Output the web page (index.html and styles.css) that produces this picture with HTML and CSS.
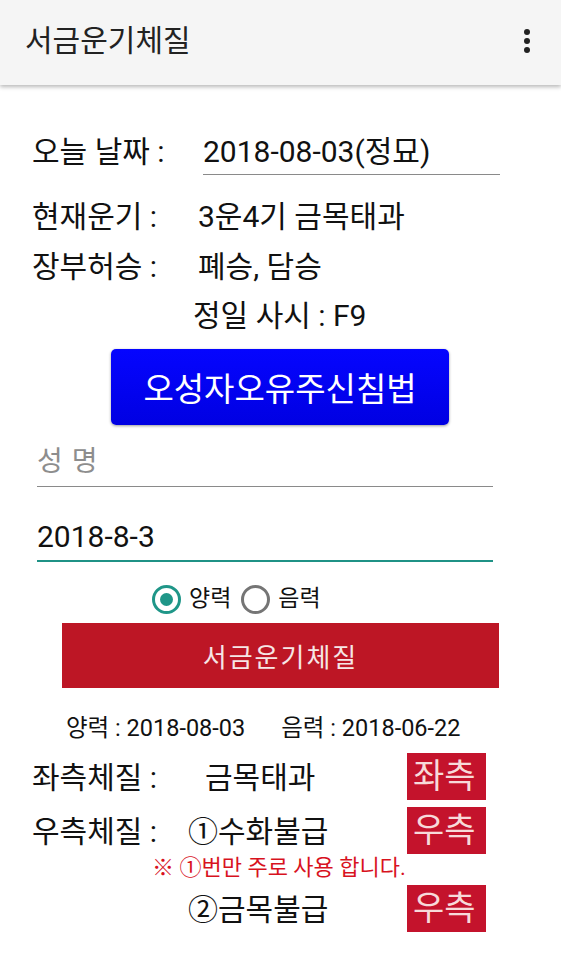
FILE: index.html
```html
<!DOCTYPE html>
<html lang="ko">
<head>
<meta charset="utf-8">
<title>서금운기체질</title>
<link rel="stylesheet" href="styles.css">
</head>
<body>
<header class="appbar">
  <div class="appbar-title">서금운기체질</div>
  <svg class="menu" width="10" height="30" viewBox="0 0 10 30" aria-hidden="true">
    <circle cx="5" cy="6" r="3"/>
    <circle cx="5" cy="15" r="3"/>
    <circle cx="5" cy="24" r="3"/>
  </svg>
</header>
<main class="content">
  <div class="row row-today">
    <span class="label">오늘 날짜 :</span>
    <span class="today-value">2018-08-03(정묘)</span>
  </div>
  <div class="row row-info r2">
    <span class="label">현재운기 :</span>
    <span class="value">3운4기 금목태과</span>
  </div>
  <div class="row row-info r3">
    <span class="label">장부허승 :</span>
    <span class="value">폐승, 담승</span>
  </div>
  <div class="row sasi">정일 사시 : F9</div>
  <button class="blue-btn">오성자오유주신침법</button>
  <div class="field field-name">성 명</div>
  <div class="field field-date">2018-8-3</div>
  <div class="radios">
    <span class="radio checked"></span><span class="radio-label">양력</span>
    <span class="radio"></span><span class="radio-label">음력</span>
  </div>
  <button class="red-btn">서금운기체질</button>
  <div class="dates">
    <span>양력 : 2018-08-03</span>
    <span>음력 : 2018-06-22</span>
  </div>
  <div class="con-row c1">
    <span class="label">좌측체질 :</span>
    <span class="con-value indent">금목태과</span>
    <span class="tag">좌측</span>
  </div>
  <div class="con-row c2">
    <span class="label">우측체질 :</span>
    <span class="con-value">①수화불급</span>
    <span class="tag">우측</span>
  </div>
  <div class="note">※ ①번만 주로 사용 합니다.</div>
  <div class="con-row c3">
    <span class="label"></span>
    <span class="con-value">②금목불급</span>
    <span class="tag">우측</span>
  </div>
</main>
</body>
</html>
```

FILE: styles.css
```css
html, body {
  margin: 0;
  padding: 0;
  background: #ffffff;
}
body {
  width: 561px;
  min-height: 960px;
  font-family: Roboto, "Noto Sans CJK KR", sans-serif;
  color: #111111;
  overflow: hidden;
}
.appbar {
  height: 85px;
  background: #f5f5f5;
  box-shadow: 0 2px 4px rgba(0, 0, 0, 0.28);
  display: flex;
  align-items: center;
  padding: 0 29px 0 25px;
  position: relative;
  z-index: 1;
}
.appbar-title {
  flex: 1;
  font-size: 30px;
  line-height: 34px;
  margin-top: -4px;
  color: #222222;
}
.menu {
  fill: #222222;
  margin-top: -4px;
}
.content {
  padding-top: 50px;
  font-size: 30px;
  line-height: 34px;
}
.row {
  display: flex;
  align-items: flex-start;
}
.label {
  padding-left: 32px;
  width: 124px;
  flex: none;
  white-space: nowrap;
}
.row-today .label {
  width: 171px;
}
.today-value {
  width: 297px;
  padding-bottom: 5px;
  border-bottom: 1.5px solid #8a8a8a;
  white-space: nowrap;
}
.row-info .label {
  width: 166px;
}
.r2 { margin-top: 25px; }
.r3 { margin-top: 16px; }
.sasi {
  margin-top: 15px;
  padding-left: 193px;
}
.blue-btn {
  display: block;
  margin: 16px 0 0 111px;
  width: 338px;
  height: 76px;
  border: none;
  border-radius: 5px;
  background: linear-gradient(#0505ff, #0000e2);
  box-shadow: 0 1px 3px rgba(0, 0, 0, 0.4);
  color: #ffffff;
  font-family: Roboto, "Noto Sans CJK KR", sans-serif;
  font-size: 33px;
  padding: 0;
}
.field {
  margin: 0 68px 0 37px;
}
.field-name {
  margin-top: 20px;
  color: #8d8d8d;
  padding-bottom: 7px;
  border-bottom: 1.5px solid #8a8a8a;
  font-size: 28px;
  letter-spacing: 1px;
}
.field-date {
  margin-top: 33px;
  padding-bottom: 6px;
  border-bottom: 2px solid #1f9286;
}
.radios {
  margin-top: 22px;
  padding-left: 152px;
  display: flex;
  align-items: center;
  height: 30px;
  font-size: 23px;
}
.radio {
  width: 23px;
  height: 23px;
  border: 3px solid #757575;
  border-radius: 50%;
  box-sizing: content-box;
  position: relative;
  margin-right: 8px;
}
.radio.checked {
  border-color: #1f9688;
}
.radio.checked::after {
  content: "";
  position: absolute;
  left: 5px;
  top: 5px;
  width: 13px;
  height: 13px;
  border-radius: 50%;
  background: #1f9688;
}
.radio-label {
  margin-right: 10px;
}
.red-btn {
  display: block;
  margin: 9px 0 0 62px;
  width: 437px;
  height: 65px;
  border: none;
  padding: 0;
  background: #bd1625;
  color: #f6e6e6;
  font-family: Roboto, "Noto Sans CJK KR", sans-serif;
  font-size: 26px;
  letter-spacing: 2px;
}
.dates {
  margin-top: 26px;
  padding-left: 66px;
  font-size: 23.5px;
  line-height: 28px;
  display: flex;
  gap: 36px;
  white-space: nowrap;
}
.con-row {
  display: flex;
  align-items: center;
  height: 47px;
}
.con-row .label {
  width: 124px;
  padding-top: 3px;
}
.con-value {
  width: 219px;
  padding-left: 32px;
  padding-top: 3px;
  white-space: nowrap;
}
.con-value.indent {
  padding-left: 49px;
  width: 202px;
}
.tag {
  width: 73px;
  height: 47px;
  padding-left: 6px;
  background: #c4132c;
  color: #f7dada;
  font-size: 34px;
  line-height: 47px;
  white-space: nowrap;
  overflow: hidden;
}
.c1 { margin-top: 11px; }
.c2 { margin-top: 7px; }
.note {
  margin-top: 2px;
  padding-left: 152px;
  font-size: 22px;
  line-height: 24px;
  color: #d8121e;
}
.c3 { margin-top: 5px; }
```
